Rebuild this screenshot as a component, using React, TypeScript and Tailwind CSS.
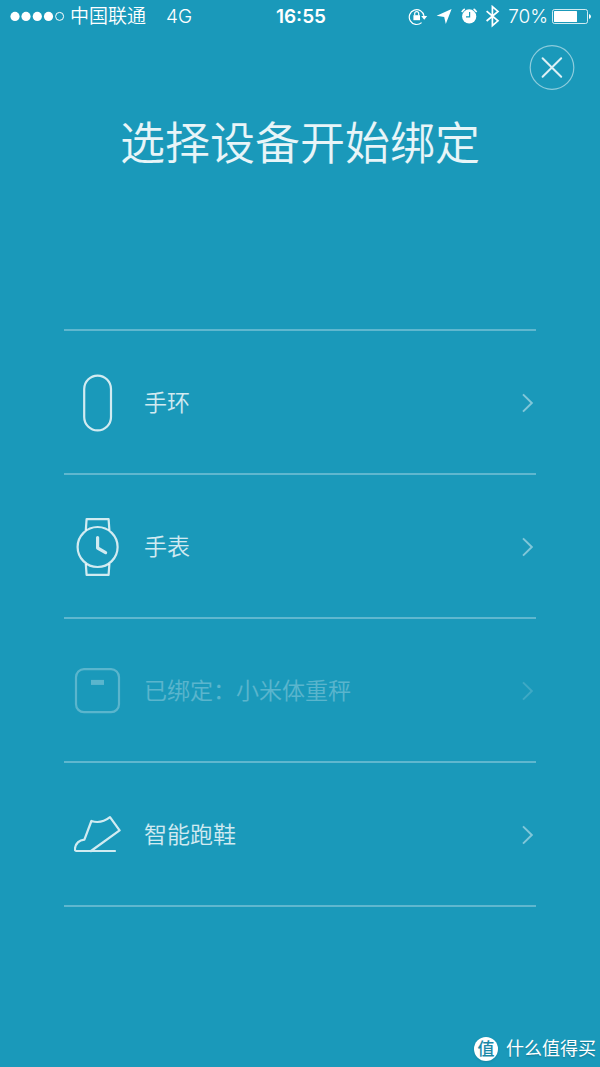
import type { ReactNode } from "react";

type Device = {
  id: string;
  label: string;
  icon: ReactNode;
  bound?: boolean;
};

const BandIcon = () => (
  <svg viewBox="0 0 48 60" className="h-[60px] w-12" fill="none" stroke="currentColor" strokeWidth="2.2" aria-hidden>
    <rect x="10.2" y="2.6" width="26.8" height="54.8" rx="13.4" />
  </svg>
);

const WatchIcon = () => (
  <svg
    viewBox="0 0 48 60"
    className="h-[60px] w-12"
    fill="none"
    stroke="currentColor"
    strokeWidth="2.2"
    strokeLinejoin="round"
    aria-hidden
  >
    <circle cx="23.6" cy="30" r="20" />
    <path d="M11.8 13.3 12.6 2.2h22l.8 11.1M11.8 46.8l.8 11h22l.8-11" />
    <path d="M23.6 20.5V31l8 4.6" strokeWidth="3.2" strokeLinecap="round" />
  </svg>
);

const ScaleIcon = () => (
  <svg viewBox="0 0 48 60" className="h-[60px] w-12" fill="none" stroke="currentColor" strokeWidth="2.2" aria-hidden>
    <rect x="2" y="8.2" width="43" height="43" rx="8" />
    <path d="M17 21.4h13" strokeWidth="5" />
  </svg>
);

const ShoeIcon = () => (
  <svg
    viewBox="0 0 48 60"
    className="h-[60px] w-12"
    fill="none"
    stroke="currentColor"
    strokeWidth="2.2"
    strokeLinecap="round"
    strokeLinejoin="round"
    aria-hidden
  >
    <path d="M41 46H2.6q-2 0-1.7-2.2Q2 35.5 10.4 34.6L17.4 16q9.6 3.2 18.6-3.8L45.6 25.4 17 46" />
  </svg>
);

const devices: Device[] = [
  { id: "band", label: "手环", icon: <BandIcon /> },
  { id: "watch", label: "手表", icon: <WatchIcon /> },
  { id: "scale", label: "已绑定：小米体重秤", icon: <ScaleIcon />, bound: true },
  { id: "shoe", label: "智能跑鞋", icon: <ShoeIcon /> },
];

const StatusIcons = () => (
  <svg viewBox="0 0 94 24" className="h-6 w-[94px]" fill="none" stroke="currentColor" aria-hidden>
    {/* rotation lock */}
    <path d="M13.6 17.6A7.4 7.4 0 1 1 16 11" strokeWidth="1.2" />
    <path d="M13.2 11h6l-3 3.8z" fill="currentColor" stroke="none" />
    <path d="M5.4 10.2h6.6v5H5.4z" fill="currentColor" stroke="none" />
    <path d="M6.7 10.4V8.6a2 2 0 0 1 4 0v1.8" strokeWidth="1.2" />
    {/* location */}
    <path d="M43.6 4 37.8 19l-1.6-7-7.6-1.2z" fill="currentColor" stroke="none" />
    {/* alarm */}
    <circle cx="61.2" cy="11.4" r="7.1" fill="currentColor" stroke="none" />
    <path d="M53.8 7.2A8.6 8.6 0 0 1 56.8 4M65.6 4a8.6 8.6 0 0 1 3 3.2" strokeWidth="1.5" />
    <path d="M61.6 7v4.8H58" stroke="#1a99ba" strokeWidth="1.2" />
    {/* bluetooth */}
    <path d="M78.6 6.2 90 15.8l-5.6 4.8V1.6L90 6.4l-11.4 9.6" strokeWidth="1.7" />
  </svg>
);

const StatusBar = () => (
  <header className="grid h-[34px] grid-cols-[1fr_auto_1fr] items-center pr-2 pl-[10px] text-[19px] leading-8 text-white">
    <div className="flex items-center">
      <svg viewBox="0 0 56 12" className="mr-1 h-3 w-14" fill="currentColor" aria-hidden>
        <circle cx="5" cy="5.4" r="4.6" />
        <circle cx="16" cy="5.4" r="4.6" />
        <circle cx="27.3" cy="5.4" r="4.6" />
        <circle cx="38.5" cy="5.4" r="4.6" />
        <circle cx="49.6" cy="5.4" r="4" fill="none" stroke="currentColor" />
      </svg>
      <span className="font-[350]">中国联通</span>
      <span className="ml-5 font-[350]">4G</span>
    </div>
    <time className="font-semibold">16:55</time>
    <div className="flex items-center justify-end">
      <StatusIcons />
      <span className="ml-1.5 font-[350]">70%</span>
      <svg viewBox="0 0 40 16" className="ml-1 h-4 w-10" fill="none" aria-hidden>
        <rect x="0.5" y="0.5" width="35" height="14" rx="2" stroke="currentColor" strokeOpacity="0.8" />
        <rect x="2" y="2" width="23" height="11" rx="0.5" fill="currentColor" />
        <path d="M37 5q2 .6 2 2.5t-2 2.5z" fill="currentColor" />
      </svg>
    </div>
  </header>
);

const DeviceRow = ({ label, icon, bound }: Device) => (
  <li className="border-b-2 border-white/30">
    <button
      type="button"
      disabled={bound}
      className={`flex h-[142px] w-full items-center pt-0.5 pl-[10px] text-left ${bound ? "opacity-35" : ""}`}
    >
      <span className="text-white/80">{icon}</span>
      <span className="ml-[22px] flex-1 text-[23px] font-[350] text-white/80">{label}</span>
      <svg
        viewBox="0 0 16 24"
        className="h-6 w-4 text-white/45"
        fill="none"
        stroke="currentColor"
        strokeWidth="2"
        aria-hidden
      >
        <path d="m3 3.4 8.8 8.6L3 20.6" />
      </svg>
    </button>
  </li>
);

const App = () => (
  <div className="flex min-h-screen flex-col bg-[#1a99ba] font-[Inter,'Noto_Sans_CJK_SC',sans-serif]">
    <StatusBar />

    <div className="flex justify-end pt-[10px] pr-[25px]">
      <button type="button" aria-label="关闭" className="text-white">
        <svg viewBox="0 0 46 46" className="h-[46px] w-[46px]" fill="none" stroke="currentColor" aria-hidden>
          <circle cx="23" cy="23.5" r="21.8" strokeWidth="1.2" strokeOpacity="0.5" />
          <path d="m13.6 14.2 18.6 18.6m0-18.6L13.6 32.8" strokeWidth="2" strokeLinecap="round" strokeOpacity="0.85" />
        </svg>
      </button>
    </div>

    <main className="px-16 pt-5">
      <h1 className="text-center text-[45px] leading-[68px] font-[350] text-white/90">选择设备开始绑定</h1>
      <ul className="mt-[151px] border-t-2 border-white/30">
        {devices.map((d) => (
          <DeviceRow key={d.id} {...d} />
        ))}
      </ul>
    </main>

    <footer className="mt-auto flex items-center justify-end pr-1 pb-1 text-white">
      <span className="flex size-6 items-center justify-center rounded-full bg-white text-[17px] leading-6 font-medium text-[#1a88a8] shadow-sm">
        值
      </span>
      <span className="ml-2 text-[18px] leading-7 text-shadow-sm">什么值得买</span>
    </footer>
  </div>
);

export default App;
